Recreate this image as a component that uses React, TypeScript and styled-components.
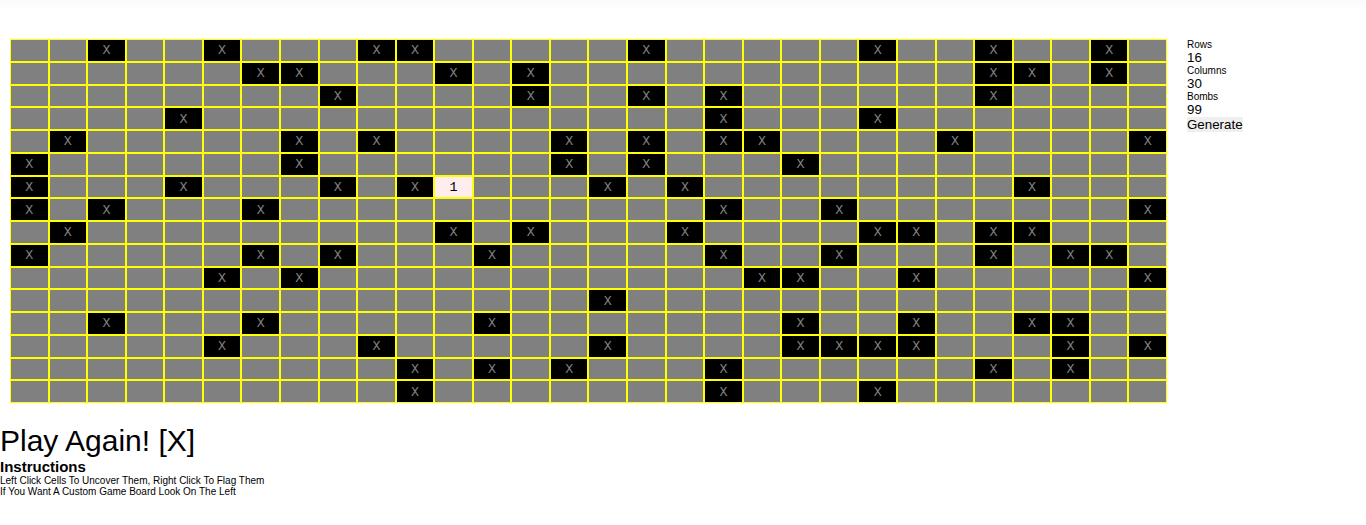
import React, { useId, useState } from 'react';
import styled, { createGlobalStyle } from 'styled-components';

const GlobalStyle = createGlobalStyle`
  * { box-sizing: border-box; margin: 0; padding: 0; }
  body {
    background: #fff;
    color: #000;
    font-family: Arial, "Liberation Sans", sans-serif;
    font-size: 10px;
    line-height: 11px;
  }
`;

const TopBar = styled.header`
  height: 0;
  box-shadow: 0 0 10px 2px rgba(0, 0, 0, 0.06);
`;

const Game = styled.main`
  display: grid;
  grid-template-columns: minmax(0, 1fr) 179px;
  column-gap: 20px;
  align-items: start;
  padding: 39px 0 20px 10px;
`;

const Board = styled.div`
  display: grid;
  grid-template-columns: repeat(30, minmax(0, 1fr));
  grid-template-rows: repeat(16, minmax(0, 1fr));
  height: 364px;
`;

type CellKind = 'covered' | 'bomb' | 'open';

const cellBackground = { covered: '#808080', bomb: '#000', open: '#ffecec' };
const cellColor = { covered: '#808080', bomb: '#808080', open: '#000' };

const Cell = styled.button<{ $kind: CellKind }>`
  border: 1px solid #ff0;
  border-radius: 0;
  padding-top: 1px;
  background: ${({ $kind }) => cellBackground[$kind]};
  color: ${({ $kind }) => cellColor[$kind]};
  font-family: "Liberation Mono", monospace;
  line-height: 15px;
  text-align: center;
`;

const Settings = styled.form`
  display: flex;
  flex-direction: column;
  align-items: flex-start;
`;

const Input = styled.input`
  display: block;
  width: 100%;
  height: 15px;
  border: 0;
  outline: 0;
  background: transparent;
  color: #000;
  font-family: inherit;
`;

const Generate = styled.button`
  height: 15px;
  border: 0;
  background: #efefef;
  color: #000;
  font-family: inherit;
  line-height: 15px;
`;

const PlayAgain = styled.button`
  display: block;
  border: 0;
  background: transparent;
  color: #000;
  font-family: inherit;
  font-size: 30px;
  line-height: 35px;
`;

const Heading = styled.h2`
  font-size: 15px;
  line-height: 17px;
`;

const bombs = [
  [2, 5, 9, 10, 16, 22, 25, 28],
  [6, 7, 11, 13, 25, 26, 28],
  [8, 13, 16, 18, 25],
  [4, 18, 22],
  [1, 7, 9, 14, 16, 18, 19, 24, 29],
  [0, 7, 14, 16, 20],
  [0, 4, 8, 10, 15, 17, 26],
  [0, 2, 6, 18, 21, 29],
  [1, 11, 13, 17, 22, 23, 25, 26],
  [0, 6, 8, 12, 18, 21, 25, 27, 28],
  [5, 7, 19, 20, 23, 29],
  [15],
  [2, 6, 12, 20, 23, 26, 27],
  [5, 9, 15, 20, 21, 22, 23, 27, 29],
  [10, 12, 14, 18, 25, 27],
  [10, 18, 22],
];

const columns = Array.from({ length: 30 }, (_, i) => i);

function kindOf(row: number, column: number): CellKind {
  if (bombs[row].includes(column)) return 'bomb';
  return row === 6 && column === 11 ? 'open' : 'covered';
}

const cellText = { covered: '', bomb: 'X', open: '1' };

function Field({ label, initial }: { label: string; initial: string }) {
  const id = useId();
  const [value, setValue] = useState(initial);
  return (
    <>
      <label htmlFor={id}>{label}</label>
      <Input id={id} value={value} onChange={(e) => setValue(e.target.value)} />
    </>
  );
}

export default function App() {
  return (
    <>
      <GlobalStyle />
      <TopBar />
      <Game>
        <Board>
          {bombs.map((_, row) =>
            columns.map((column) => {
              const kind = kindOf(row, column);
              return (
                <Cell key={`${row}-${column}`} type="button" $kind={kind}>
                  {cellText[kind]}
                </Cell>
              );
            }),
          )}
        </Board>
        <Settings onSubmit={(e) => e.preventDefault()}>
          <Field label="Rows" initial="16" />
          <Field label="Columns" initial="30" />
          <Field label="Bombs" initial="99" />
          <Generate type="submit">Generate</Generate>
        </Settings>
      </Game>
      <PlayAgain type="button">Play Again! [X]</PlayAgain>
      <Heading>Instructions</Heading>
      <p>Left Click Cells To Uncover Them, Right Click To Flag Them</p>
      <p>If You Want A Custom Game Board Look On The Left</p>
    </>
  );
}
